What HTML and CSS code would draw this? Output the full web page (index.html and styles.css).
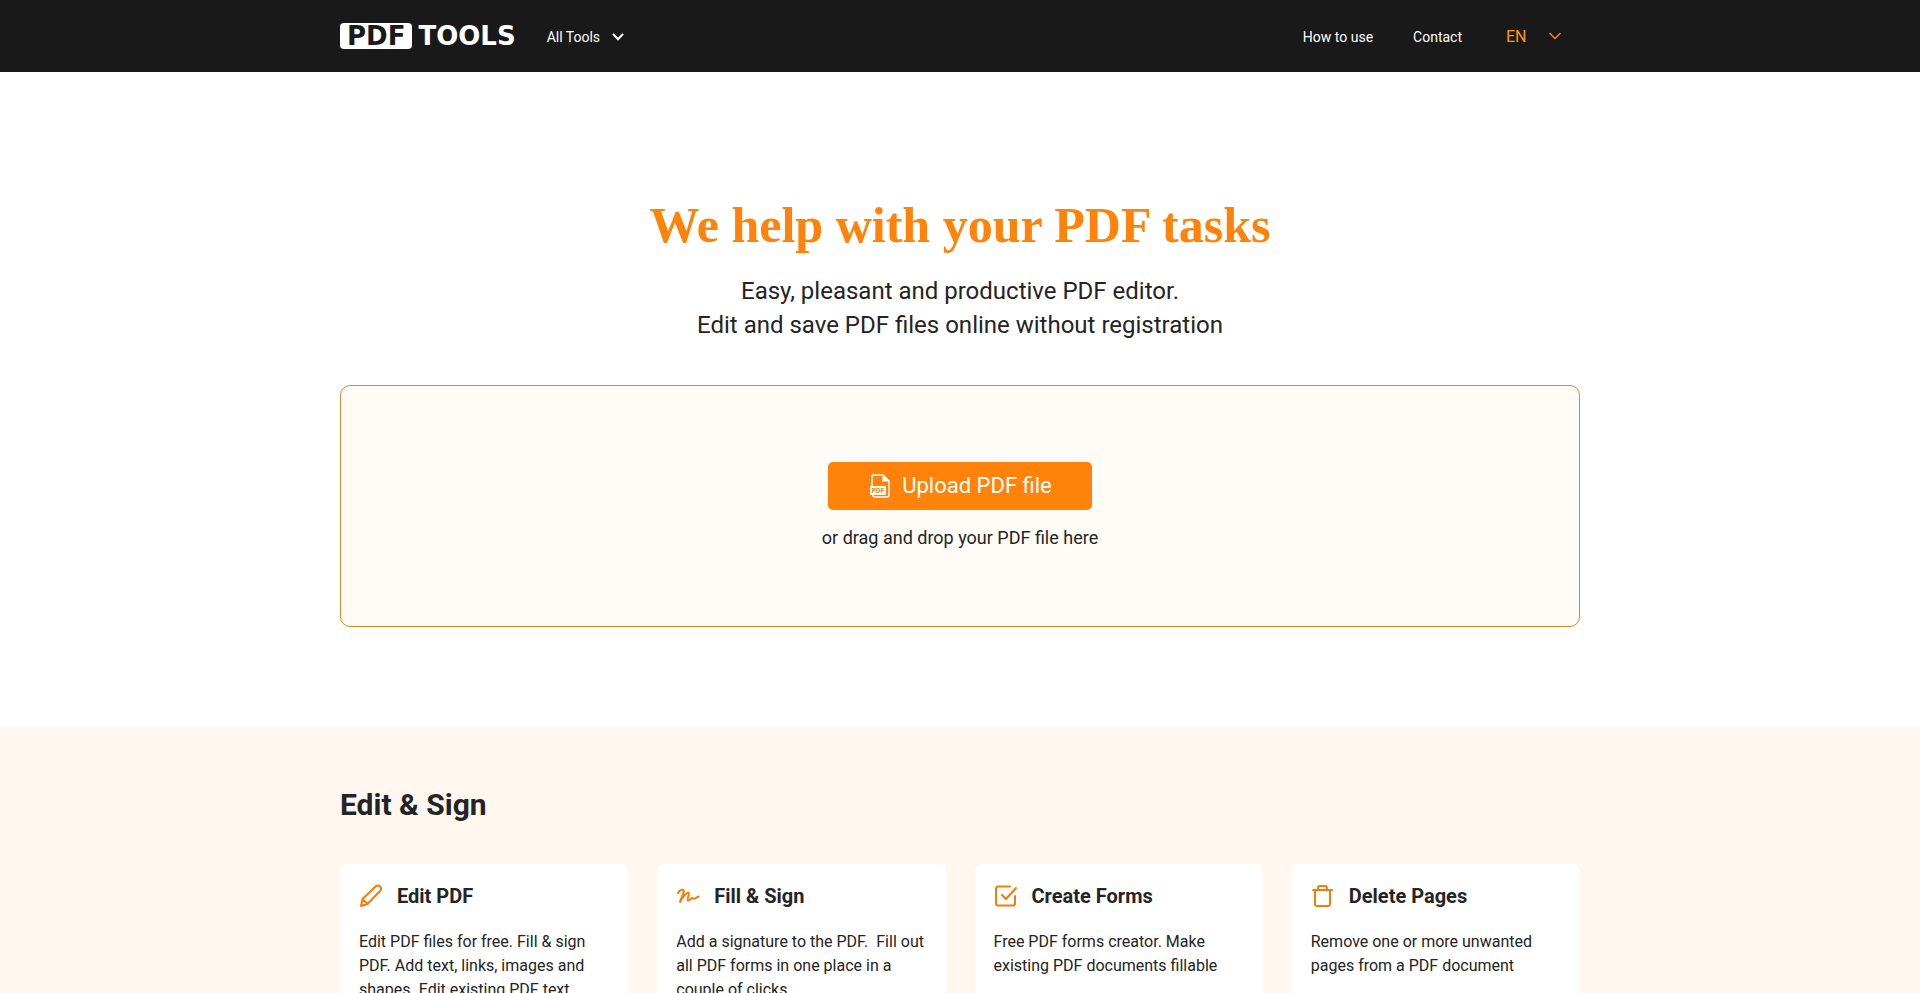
FILE: index.html
```
<!DOCTYPE html>
<html lang="en">
<head>
    <meta charset="UTF-8">
    <meta name="viewport" content="width=device-width, initial-scale=1.0">
    <title>PDF Tools</title>
    <link rel="stylesheet" href="styles.css">
</head>
<body>
    <header class="header">
        <div class="container header-row">
            <a class="logo" href="#"><span class="logo-badge">PDF</span><span class="logo-text">TOOLS</span></a>
            <button class="tools-btn" type="button">
                All Tools
                <svg width="12" height="8" viewBox="0 0 12 8" fill="none" stroke="currentColor" stroke-width="2"><path d="M1 1l5 5.2L11 1"/></svg>
            </button>
            <nav class="nav">
                <a href="#">How to use</a>
                <a href="#">Contact</a>
            </nav>
            <div class="lang">
                <select class="lang-select" aria-label="Language">
                    <option>EN</option>
                </select>
                <svg class="lang-arrow" width="12" height="8" viewBox="0 0 12 8" fill="none" stroke="currentColor" stroke-width="1.5"><path d="M.5 1L6 6.500 11.500 1"/></svg>
            </div>
        </div>
    </header>

    <main>
        <section class="hero container">
            <h1 class="title">We help with your PDF tasks</h1>
            <p class="subtitle">Easy, pleasant and productive PDF editor.<br>Edit and save PDF files online without registration</p>
            <div class="dropzone">
                <button class="upload-btn" type="button">
                    <svg width="20" height="24" viewBox="0 0 20 24" fill="none">
                        <path d="M2 13V3a2 2 0 0 1 2-2h9l6 6v14a2 2 0 0 1-2 2H5a2 2 0 0 1-2-2" stroke="currentColor" stroke-width="1.5"/>
                        <path d="M12.500.5V7.500H19.500z" fill="currentColor"/>
                        <rect y="12" width="16" height="9" rx="1" fill="currentColor"/>
                        <text class="file-label" x="8" y="19" text-anchor="middle">PDF</text>
                    </svg>
                    Upload PDF file
                </button>
                <p class="drop-text">or drag and drop your PDF file here</p>
            </div>
        </section>

        <section class="tools">
            <div class="container">
                <h2 class="tools-title">Edit &amp; Sign</h2>
                <div class="cards">
                    <a class="card" href="#">
                        <h3 class="card-title">
                            <svg class="icon" viewBox="0 0 24 24"><path d="M2 22l1.500-7L16.600 2.500a3 3 0 0 1 4.500 0 3 3 0 0 1 0 4.500L8.500 20zM3.500 15l5 5"/></svg>
                            Edit PDF
                        </h3>
                        <p class="card-text">Edit PDF files for free. Fill &amp; sign PDF. Add text, links, images and shapes. Edit existing PDF text. Annotate PDF</p>
                    </a>
                    <a class="card" href="#">
                        <h3 class="card-title">
                            <svg class="icon" viewBox="0 0 24 24"><path d="M2 9C3.500 6 7 4.500 7.700 6.800 8.200 9 5.500 13 4 18 6.500 13 10.500 8 12.500 8.800c1.500.8-2 6.700-.5 7.700 1.700.8 2.500-2.500 4.300-2.500 1 0 .8 1 2 .7 1.500-.4 2.700-1.700 4.200-2.200"/></svg>
                            Fill &amp; Sign
                        </h3>
                        <p class="card-text">Add a signature to the PDF.&nbsp; Fill out all PDF forms in one place in a couple of clicks.</p>
                    </a>
                    <a class="card" href="#">
                        <h3 class="card-title">
                            <svg class="icon" viewBox="0 0 24 24"><path d="M16 2.500H4a2 2 0 0 0-2 2v15a2 2 0 0 0 2 2H19a2 2 0 0 0 2-2V12M8 11l4 4L22 4"/></svg>
                            Create Forms
                        </h3>
                        <p class="card-text">Free PDF forms creator. Make existing PDF documents fillable</p>
                    </a>
                    <a class="card" href="#">
                        <h3 class="card-title">
                            <svg class="icon" viewBox="0 0 24 24"><path d="M2 6h19M4 6V20a2 2 0 0 0 2 2h11a2 2 0 0 0 2-2V6M7 6V4a2 2 0 0 1 2-2h5a2 2 0 0 1 2 2v2"/></svg>
                            Delete Pages
                        </h3>
                        <p class="card-text">Remove one or more unwanted pages from a PDF document</p>
                    </a>
                </div>
            </div>
        </section>
    </main>
</body>
</html>
```
FILE: styles.css
```
*{
    margin:0;
    padding:0;
    box-sizing: border-box;
}
body{
    font-family: Roboto,sans-serif;
    font-size: 16px;
    color:#242424;
    background-color: #fff;
}
a{
    color:inherit;
    text-decoration: none;
}
button,select{
    font-family: inherit;
    border:none;
    cursor:pointer;
}
.container{
    width:100%;
    max-width: 1240px;
    margin:0 auto;
}
/* header */
.header{
    background-color: #191919;
    color:#fff;
}
.header-row{
    min-height: 72px;
    display: flex;
    align-items: center;
}
.logo{
    display: flex;
    align-items: center;
    gap:6px;
    font-family: "DejaVu Sans",sans-serif;
    font-size: 26px;
    font-weight: 700;
    line-height: 26px;
}
.logo-badge{
    padding:0 7px;
    border-radius: 4px;
    background-color: #fff;
    color:#191919;
}
.tools-btn{
    display: flex;
    align-items: center;
    gap:12px;
    margin-left: 31px;
    padding-top: 2px;
    background: none;
    color:#fff;
    font-size: 14px;
}
.nav{
    display: flex;
    gap:40px;
    margin-left: auto;
    padding-top: 2px;
    font-size: 14px;
}
.lang{
    position: relative;
    margin:0 19px 0 44px;
    color:#ff830a;
}
.lang-select{
    width:55px;
    appearance: none;
    background: none;
    color:#ff980a;
    font-size: 16px;
}
.lang-arrow{
    position: absolute;
    top:5px;
    right:0;
    pointer-events: none;
}
/* hero */
.hero{
    padding:123px 0 100px;
    text-align: center;
}
.title{
    font-family: "Liberation Serif",serif;
    font-size: 50px;
    line-height: 60px;
    color:#ff830a;
}
.subtitle{
    margin:19px 0 43px;
    font-size: 24px;
    line-height: 34px;
}
.dropzone{
    display: flex;
    flex-direction: column;
    align-items: center;
    padding:76px 20px;
    border:1px solid #d98a2b;
    border-radius: 10px;
    background-color: #fffcf8;
}
.upload-btn{
    display: flex;
    align-items: center;
    gap:12px;
    height: 48px;
    padding:0 40px 1px 42px;
    border-radius: 5px;
    background-color: #ff830a;
    color:#fff;
    font-size: 22px;
}
.file-label{
    font-size: 7px;
    font-weight: 700;
    fill:#ff830a;
}
.drop-text{
    margin-top: 16px;
    font-size: 18px;
    line-height: 24px;
}
/* tools */
.tools{
    padding:60px 0;
    background-color: #fff7f0;
}
.tools-title{
    margin-bottom: 41px;
    font-size: 30px;
    line-height: 36px;
}
.cards{
    display: grid;
    grid-template-columns: repeat(4,1fr);
    gap:29px;
}
.card{
    padding:20px 19px;
    border-radius: 8px;
    background-color: #fff;
}
.card-title{
    display: flex;
    align-items: center;
    gap:14px;
    font-size: 20px;
    line-height: 24px;
}
.icon{
    width:24px;
    height: 24px;
    fill:none;
    stroke:#f57c0a;
    stroke-width: 2;
    stroke-linecap: round;
    stroke-linejoin: round;
}
.card-text{
    margin-top: 22px;
    line-height: 24px;
}
```
